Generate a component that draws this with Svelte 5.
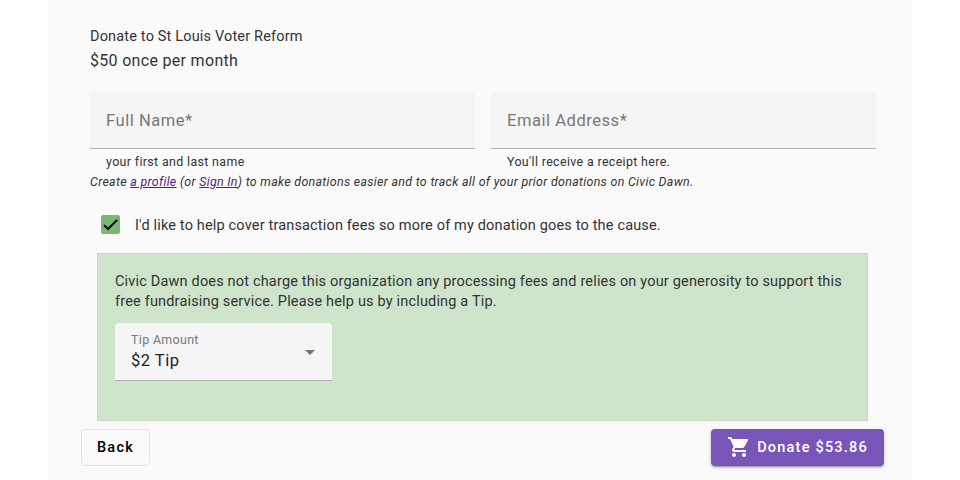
<script>
  let fullName = $state('');
  let email = $state('');
  let coverFees = $state(true);
  let tip = $state(2);

  const total = '53.86';
</script>

<main class="panel">
  <header>
    <div class="title">Donate to St Louis Voter Reform</div>
    <div class="amount">$50 once per month</div>
  </header>

  <div class="fields">
    <div class="field">
      <input type="text" placeholder="Full Name*" aria-label="Full Name" bind:value={fullName} />
      <div class="helper">your first and last name</div>
    </div>
    <div class="field">
      <input type="email" placeholder="Email Address*" aria-label="Email Address" bind:value={email} />
      <div class="helper">You'll receive a receipt here.</div>
    </div>
  </div>

  <p class="note"><em>Create <a href="#profile">a profile</a> (or <a href="#signin">Sign In</a>) to make donations easier and to track all of your prior donations on Civic Dawn.</em></p>

  <button class="check-row" role="checkbox" aria-checked={coverFees} onclick={() => coverFees = !coverFees}>
    <span class="box" class:checked={coverFees}>
      {#if coverFees}
        <svg viewBox="0 0 24 24">
          <path d="M1.73,12.91 8.1,19.28 22.79,4.59" fill="none" stroke="#000" stroke-width="3.12" />
        </svg>
      {/if}
    </span>
    <span class="check-label">I'd like to help cover transaction fees so more of my donation goes to the cause.</span>
  </button>

  <section class="tip">
    <p>Civic Dawn does not charge this organization any processing fees and relies on your generosity to support this free fundraising service. Please help us by including a Tip.</p>
    <div class="select">
      <div class="select-text">
        <span class="select-label">Tip Amount</span>
        <span class="select-value">${tip} Tip</span>
      </div>
      <svg class="arrow" viewBox="0 0 10 5"><path d="M0 0h10L5 5z" /></svg>
    </div>
  </section>

  <footer>
    <button class="back">Back</button>
    <button class="donate">
      <svg viewBox="0 0 24 24">
        <path d="M7 18c-1.1 0-1.99.9-1.99 2S5.9 22 7 22s2-.9 2-2-.9-2-2-2zM1 2v2h2l3.6 7.59-1.35 2.45c-.16.28-.25.61-.25.96 0 1.1.9 2 2 2h12v-2H7.42c-.14 0-.25-.11-.25-.25l.03-.12.9-1.63h7.45c.75 0 1.41-.41 1.75-1.03l3.58-6.49c.08-.14.12-.31.12-.48 0-.55-.45-1-1-1H5.21l-.94-2H1zm16 16c-1.1 0-1.99.9-1.99 2s.89 2 1.99 2 2-.9 2-2-.9-2-2-2z" />
      </svg>
      Donate ${total}
    </button>
  </footer>
</main>

<style>
  :global(body) {
    background: #fff;
    overflow: hidden;
  }

  .panel {
    box-sizing: border-box;
    width: 864px;
    height: 480px;
    margin: 0 auto;
    padding: 27px 28px 0 33px;
    background: #fafafa;
    color: #333;
    font-family: Roboto, sans-serif;
    font-size: 14.5px;
    letter-spacing: 0.165px;
  }

  header {
    padding-left: 9px;
  }

  .title {
    line-height: 20px;
  }

  .amount {
    margin-top: 1px;
    font-size: 16px;
    line-height: 25px;
    letter-spacing: 0.31px;
  }

  .fields {
    display: flex;
    gap: 16px;
    margin: 18px 8px 0 9px;
  }

  .field {
    flex: 1;
  }

  .field input {
    display: block;
    box-sizing: border-box;
    width: 100%;
    height: 58px;
    padding: 1px 16px 0;
    border: none;
    border-bottom: 1px solid #b0b0b0;
    border-radius: 4px 4px 0 0;
    background: #f5f5f5;
    font-family: inherit;
    font-size: 16.5px;
    letter-spacing: 0.55px;
  }

  .field input::placeholder {
    color: #777;
    opacity: 1;
  }

  .helper {
    padding: 3px 16px 0;
    font-size: 12.4px;
    line-height: 20px;
    letter-spacing: 0.36px;
  }

  .note {
    margin: 0 0 0 9px;
    font-size: 12.4px;
    line-height: 20px;
    letter-spacing: 0.31px;
  }

  .note a {
    color: #551a8b;
  }

  .check-row {
    display: flex;
    align-items: center;
    gap: 15px;
    height: 41px;
    margin: 12px 0 0 20px;
    padding: 0;
    border: none;
    background: none;
    color: inherit;
    font: inherit;
    letter-spacing: 0.165px;
    cursor: pointer;
  }

  .check-label {
    padding-top: 2px;
  }

  .box {
    display: flex;
    box-sizing: border-box;
    width: 19px;
    height: 19px;
    padding: 1px;
    border: 1px solid #777;
    border-radius: 2px;
  }

  .box.checked {
    border-color: #7ab774;
    background: #7ab774;
  }

  .box svg {
    width: 100%;
    height: 100%;
  }

  .tip {
    box-sizing: border-box;
    height: 168px;
    margin: 8px 16px 0;
    padding: 18px 16px 17px 17px;
    border: 1px solid #c3dbc1;
    background: #cee5cb;
  }

  .tip p {
    margin: 0;
    line-height: 20px;
    letter-spacing: 0.175px;
  }

  .select {
    display: flex;
    align-items: center;
    justify-content: space-between;
    box-sizing: border-box;
    width: 217px;
    height: 58px;
    margin-top: 11px;
    padding: 0 17px 0 16px;
    border-bottom: 1px solid #a9b0a8;
    border-radius: 4px 4px 0 0;
    background: #f5f5f5;
  }

  .select-text {
    display: flex;
    flex-direction: column;
    padding-bottom: 1px;
  }

  .select-label {
    color: #777;
    font-size: 12.4px;
    line-height: 20px;
    letter-spacing: 0.36px;
  }

  .select-value {
    font-size: 16.5px;
    line-height: 22px;
    letter-spacing: 0.5px;
    color: #222;
  }

  .arrow {
    width: 10px;
    height: 5px;
    margin-top: 2px;
    fill: #757575;
  }

  footer {
    display: flex;
    justify-content: space-between;
    margin-top: 8px;
  }

  footer button {
    display: flex;
    align-items: center;
    box-sizing: border-box;
    height: 37px;
    border-radius: 4px;
    font-family: inherit;
    font-size: 14.5px;
    font-weight: 500;
    letter-spacing: 1.22px;
    cursor: pointer;
  }

  .back {
    padding: 0 15px;
    border: 1px solid #e5e5e5;
    background: transparent;
    color: #000;
  }

  .donate {
    gap: 6px;
    padding: 0 16px;
    border: none;
    background: #7856b9;
    color: #fff;
    box-shadow: 0 3px 1px -2px rgba(0, 0, 0, 0.2), 0 2px 2px rgba(0, 0, 0, 0.14), 0 1px 5px rgba(0, 0, 0, 0.12);
  }

  .donate svg {
    width: 24px;
    height: 24px;
    margin-bottom: 2px;
    fill: #fff;
  }
</style>
